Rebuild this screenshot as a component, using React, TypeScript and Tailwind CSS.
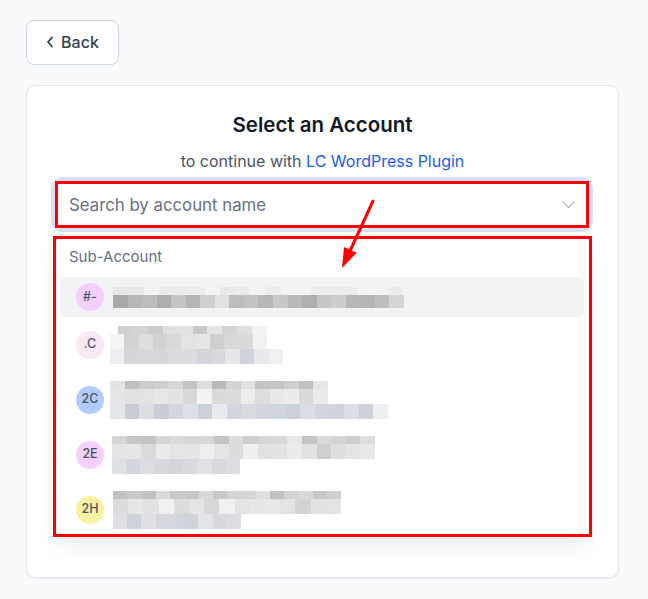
import React from "react";

type Line = { ml: number; w: number; h: number; c: string[] };
type Row = { label: string; bg: string; gap: number; lines: Line[]; active?: boolean };

const rows: Row[] = [
  {
    label: "#-",
    bg: "#f5d0fe",
    gap: 9,
    active: true,
    lines: [
      { ml: 0, w: 290, h: 8, c: ["#e8e8ea", "#e8e8ea", "transparent", "#ececee", "#ececee", "#ececee", "transparent", "#e9e9eb", "#ececee", "transparent", "#ececee", "transparent", "transparent", "#ececee", "#ececee", "#ececee", "transparent", "transparent", "#ececee"] },
      { ml: 0, w: 291, h: 13, c: ["#a9a9a9", "#b7b7b7", "#bdbdbd", "#aeaeae", "#c4c4c4", "#b5b5b5", "#cfcfcf", "#e2e2e2", "#bdbdbd", "#c2c2c2", "#b8b8b8", "#c7c7c7", "#b9b9b9", "#b0b0b0", "#c6c6c6", "#cdcdcd", "#b8b8b8", "#b5b5b5", "#bebebe", "#d5d5d5"] },
    ],
  },
  {
    label: ".C",
    bg: "#fce7f6",
    gap: 6,
    lines: [
      { ml: 8, w: 149, h: 8, c: ["#cfd0d0", "#d4d4d4", "#cdcdcd", "#e0e0e0", "#e2e2e2", "#c8c8ca", "#e3e4e4", "#d5d5d5", "#dedede", "#f3f3f3"] },
      { ml: 0, w: 157, h: 15, c: ["#f5f5f5", "#d3d3d3", "#dcdddc", "#d2d2d2", "#d9d9d9", "#e3e3e3", "#e5e5e5", "#cfcfcf", "#d8d8d8", "#dadada", "#f2f2f2"] },
      { ml: 0, w: 173, h: 15, c: ["#eeeef0", "#d4d6da", "#d5d7db", "#d4d6da", "#dadce0", "#dadce0", "#d3d5da", "#d8d9dd", "#e5e6e9", "#d1d3da", "#e8e9ec", "#f0f0f2"] },
    ],
  },
  {
    label: "2C",
    bg: "#b2ccff",
    gap: 6,
    lines: [
      { ml: 0, w: 218, h: 8, c: ["#e4e4e4", "#bebebe", "#cbcbcb", "#d0d0d0", "#d6d6d6", "#c4c4c4", "#dedede", "#b9b9b9", "#d3d3d3", "#e1e1e1", "#c3c3c3", "#c5c5c5", "#cfcfcf", "#c1c1c1", "#e6e6e6"] },
      { ml: 0, w: 218, h: 15, c: ["#e6e6e6", "#e1e2e1", "#e3e3e3", "#e8e8e8", "#e2e2e2", "#d8d8d8", "#f3f3f3", "#dadada", "#dbdbdb", "#ececec", "#dedede", "#e8e8e8", "#ebebeb", "#d9d9d9", "#ebebeb"] },
      { ml: 0, w: 278, h: 15, c: ["#e4e5e8", "#c9ccd4", "#dcdee2", "#c9ccd5", "#d3d6de", "#dcdfe3", "#ccd0d9", "#e9eaee", "#d4d6de", "#d9dbe1", "#d3d6de", "#d1d5dd", "#ccd0da", "#dadde3", "#d3d6dd", "#d0d3db", "#dcdee3", "#cdd1da", "#eeeff1"] },
    ],
  },
  {
    label: "2E",
    bg: "#f5d0fe",
    gap: 8,
    lines: [
      { ml: 0, w: 263, h: 8, c: ["#d4d4d4", "#c7c7c7", "#c3c3c3", "#d4d4d4", "#d9d9d9", "#d5d5d5", "#d7d7d7", "#c5c5c5", "#dcdcdc", "#cfcfcf", "#d6d6d6", "#d8d8d8", "#e8e8e8", "#c5c5c5", "#d9d9d9", "#d4d4d4", "#cdcdcd", "#dedede"] },
      { ml: 0, w: 263, h: 15, c: ["#e3e3e3", "#e6e6e6", "#dadbda", "#eaeaea", "#e5e5e5", "#e4e4e4", "#eeeeee", "#e4e4e4", "#dcdcdc", "#efefef", "#e1e1e1", "#e3e3e3", "#ebebeb", "#e2e2e2", "#cfcfcf", "#dedede", "#e4e4e4", "#e9e9e9"] },
      { ml: 0, w: 128, h: 15, c: ["#dfe0e4", "#d3d6de", "#dcdde2", "#d7d8dd", "#d3d5da", "#d8dadf", "#e0e1e5", "#d8dadf", "#dcdde1"] },
    ],
  },
  {
    label: "2H",
    bg: "#fdf0a0",
    gap: 9,
    lines: [
      { ml: 0, w: 228, h: 8, c: ["#c1c1c1", "#cacaca", "#c2c2c2", "#dadada", "#cacaca", "#c8c8c8", "#d8d8d8", "#c9c9c9", "#d3d3d3", "#d5d5d5", "#e0e0e0", "#c1c1c1", "#d2d2d2", "#d8d8d8", "#c8c8c8", "#cfcfcf"] },
      { ml: 0, w: 228, h: 15, c: ["#dcdcdc", "#e6e7e6", "#e2e2e2", "#f1f1f1", "#dcdcdc", "#e3e4e3", "#d6d8d6", "#f0f0f0", "#e3e3e3", "#e6e6e6", "#e7e8e7", "#e3e3e3", "#d2d3d2", "#e2e2e2", "#e3e3e3"] },
      { ml: 0, w: 128, h: 15, c: ["#dfe0e4", "#d0d3da", "#dfe0e4", "#d5d7dd", "#d3d6dd", "#d0d3da", "#e3e4e8", "#d6d8dd", "#dcdde1"] },
    ],
  },
];

function Mosaic({ lines, gap }: { lines: Line[]; gap: number }) {
  return (
    <div className="flex flex-col" style={{ marginLeft: gap }}>
      {lines.map((l, i) => (
        <div key={i} className="flex" style={{ marginLeft: l.ml, width: l.w, height: l.h }}>
          {l.c.map((col, j) => (
            <div key={j} className="flex-1" style={{ backgroundColor: col }} />
          ))}
        </div>
      ))}
    </div>
  );
}

export default function App() {
  return (
    <div
      className="relative min-h-[599px] w-[648px] bg-[#f9fafb] pt-[20px] pl-[26px]"
      style={{ fontFamily: "Inter, 'Noto Sans', sans-serif" }}
    >
      <button className="flex h-[45px] w-[93px] items-center justify-center gap-[7px] rounded-[8px] border border-[#d0d5dd] bg-white pb-[1px] text-[16px] font-medium text-[#344054]">
        <svg width="8" height="12" viewBox="0 0 8 12" fill="none">
          <path d="M6 1.5L2 6l4 4.5" stroke="#344054" strokeWidth="1.8" strokeLinecap="round" strokeLinejoin="round" />
        </svg>
        <span>Back</span>
      </button>

      <div className="mt-[20px] h-[493px] w-[593px] rounded-[10px] border border-[#e4e7ec] bg-white px-[28px] pt-[25px] shadow-[0_1px_2px_rgba(16,24,40,0.06)]">
        <h1 className="text-center text-[20.5px] leading-[28px] font-semibold text-[#101828]">Select an Account</h1>
        <p className="mt-[10px] text-center text-[16px] leading-[24px] text-[#475467]">
          to continue with <span className="text-[#155eef]">LC WordPress Plugin</span>
        </p>

        <div className="relative mt-[8px] h-[47px] w-[534px] rounded-[8px] bg-white shadow-[0_0_0_4px_#d6e2fd]">
          <div className="flex h-full items-center justify-between pt-[3px] pl-[14px] pr-[14px]">
            <span className="text-[16.8px] text-[#667085]">Search by account name</span>
            <svg width="13" height="8" viewBox="0 0 13 8" fill="none" className="-mt-[3px]">
              <path d="M1 1l5.5 5.5L12 1" stroke="#b0b6c2" strokeWidth="1.2" strokeLinecap="round" strokeLinejoin="round" />
            </svg>
          </div>
          <div className="pointer-events-none absolute inset-0 border-[3px] border-[#ff0000]" />
        </div>

        <div className="relative mt-[10px] w-[534px]">
          <div className="h-[297px] overflow-hidden rounded-[8px] bg-white px-[5px] pt-[9px] shadow-[0_12px_24px_-4px_rgba(16,24,40,0.10),0_4px_8px_-2px_rgba(16,24,40,0.05)]">
            <div className="px-[9px] text-[15px] leading-[20px] text-[#667085]">Sub-Account</div>
            <div className="mt-[10px] flex flex-col">
              {rows.map((r, i) => (
                <div
                  key={i}
                  className={
                    r.active
                      ? "flex h-[40px] items-center rounded-[6px] bg-[#f2f3f5] px-[16px]"
                      : "flex h-[55px] items-center px-[16px]"
                  }
                >
                  <div
                    className="flex h-[28px] w-[28px] shrink-0 items-center justify-center rounded-full text-[12.5px] font-medium text-[#475467]"
                    style={{ backgroundColor: r.bg }}
                  >
                    {r.label}
                  </div>
                  <Mosaic lines={r.lines} gap={r.gap} />
                </div>
              ))}
            </div>
          </div>
          <div className="pointer-events-none absolute -top-[2px] -left-[2px] -right-[3px] -bottom-[2px] border-[3px] border-[#ff0000]" />
        </div>
      </div>

      <svg className="pointer-events-none absolute top-0 left-0" width="648" height="599" viewBox="0 0 648 599">
        <line x1="373" y1="201" x2="350" y2="251" stroke="#ff0000" strokeWidth="3" strokeLinecap="round" />
        <polygon points="342,268 356.8,252.7 344,246.9" fill="#ff0000" />
      </svg>
    </div>
  );
}
